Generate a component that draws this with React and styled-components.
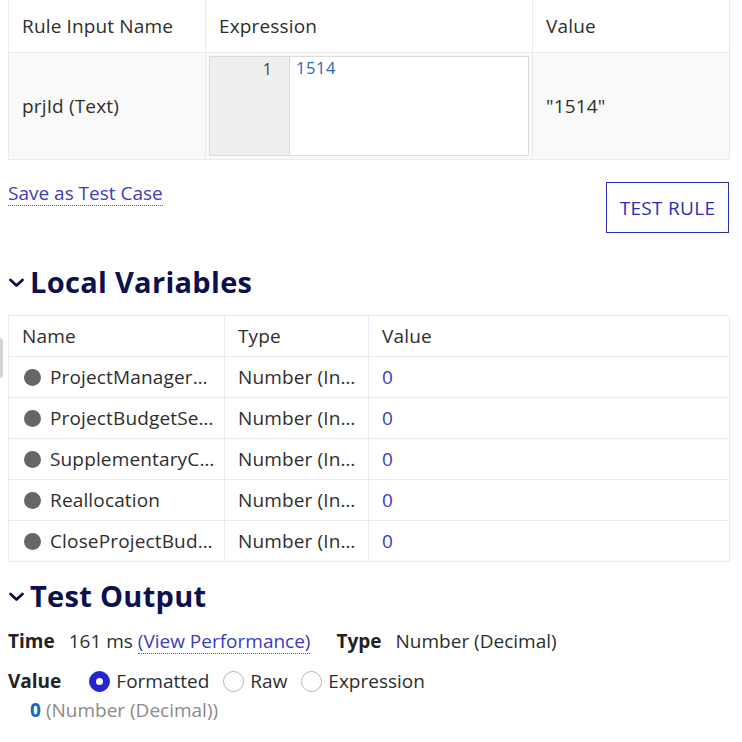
import React from "react";
import styled, { createGlobalStyle } from "styled-components";

const Global = createGlobalStyle`
  html, body { margin: 0; padding: 0; background: #fff; }
  body { font-family: "Open Sans", "Noto Sans", sans-serif; color: #2e2e2e; }
  * { box-sizing: border-box; }
`;

const Page = styled.div`
  position: relative;
  width: 742px;
  padding: 0 13px 0 8px;
`;

const Handle = styled.div`
  position: absolute;
  left: -3px;
  top: 338px;
  width: 6px;
  height: 40px;
  border-radius: 3px;
  background: #d4d4d4;
`;

const Table = styled.div`
  display: grid;
  grid-template-columns: ${(p) => p.$cols};
  border-left: 1px solid #ebebeb;
  border-top: ${(p) => (p.$noTop ? "none" : "1px solid #ebebeb")};
`;

const Cell = styled.div`
  display: flex;
  align-items: center;
  height: ${(p) => p.$h}px;
  padding: ${(p) => (p.$pad != null ? p.$pad : "0 13px")};
  border-right: 1px solid #ebebeb;
  border-bottom: 1px solid #ebebeb;
  background: ${(p) => p.$bg || "#fff"};
  font-size: 19px;
  letter-spacing: 0.15px;
  color: #2e2e2e;
  white-space: nowrap;
  overflow: hidden;
  min-width: 0;
`;

const Editor = styled.div`
  display: flex;
  width: 100%;
  height: 100%;
  border: 1px solid #dcdcdc;
  background: #fff;
`;

const Gutter = styled.div`
  width: 80px;
  background: #efefef;
  border-right: 1px solid #dcdcdc;
  text-align: right;
  padding: 1px 17px 0 0;
  font-size: 16px;
  color: #444;
  line-height: 22px;
`;

const Code = styled.div`
  padding: 0 0 0 6px;
  font-size: 16.5px;
  line-height: 22px;
  color: #1b6bbf;
  letter-spacing: 0.6px;
`;

const ActionRow = styled.div`
  display: flex;
  justify-content: space-between;
  align-items: flex-start;
  margin-top: 21px;
`;

const DottedLink = styled.a`
  font-size: 19px;
  line-height: 24px;
  color: #3c3cc4;
  text-decoration: none;
  border-bottom: 1px dotted #666;
  cursor: pointer;
`;

const OutlineButton = styled.button`
  height: 51px;
  width: 123px;
  border: 1px solid #2b2bb8;
  background: #fff;
  color: #2b2bb8;
  font-family: inherit;
  font-size: 19px;
  font-weight: 500;
  letter-spacing: 0.3px;
  padding: 0;
  margin-top: 1px;
`;

const SectionHeading = styled.h2`
  display: flex;
  align-items: center;
  gap: 5px;
  margin: ${(p) => p.$m};
  font-size: 29px;
  font-weight: 700;
  line-height: 36px;
  color: #0d104f;
  letter-spacing: 0.3px;
`;

const Chevron = () => (
  <svg width="17" height="12" viewBox="0 0 17 12" style={{ marginTop: 2 }}>
    <path d="M2.5 3 L8.5 8.5 L14.5 3" fill="none" stroke="#0d104f" strokeWidth="2.8" strokeLinecap="round" strokeLinejoin="round" />
  </svg>
);

const Dot = styled.span`
  width: 17px;
  height: 17px;
  border-radius: 50%;
  background: #666;
  flex: none;
  margin: 0 9px 0 2px;
`;

const Blue = styled.span`
  color: #3a3ac4;
`;

const InfoLine = styled.div`
  display: flex;
  align-items: center;
  font-size: 19px;
  line-height: 26px;
  margin-top: ${(p) => p.$mt}px;
  color: #2e2e2e;
`;

const Label = styled.span`
  font-weight: 700;
  color: #222;
  margin-right: ${(p) => p.$mr}px;
`;

const Spacer = styled.span`
  display: inline-block;
  width: ${(p) => p.$w}px;
`;

const Radio = styled.span`
  display: inline-flex;
  align-items: center;
  justify-content: center;
  width: 21px;
  height: 21px;
  border-radius: 50%;
  margin-right: 6px;
  flex: none;
  background: ${(p) => (p.$on ? "#2525d0" : "#fff")};
  border: 1px solid ${(p) => (p.$on ? "#2525d0" : "#b4b4b4")};
  &::after {
    content: "";
    display: ${(p) => (p.$on ? "block" : "none")};
    width: 7px;
    height: 7px;
    border-radius: 50%;
    background: #fff;
  }
`;

const RadioOption = styled.label`
  display: inline-flex;
  align-items: center;
  margin-right: 14px;
`;

const Result = styled.div`
  font-size: 19px;
  line-height: 24px;
  padding-left: 22px;
  margin-top: 4px;
  color: #8a8a8a;
`;

const ResultNum = styled.span`
  color: #1466c4;
  font-weight: 700;
  margin-right: 5px;
`;

const vars = [
  "ProjectManager…",
  "ProjectBudgetSe…",
  "SupplementaryC…",
  "Reallocation",
  "CloseProjectBud…",
];

export default function App() {
  return (
    <Page>
      <Global />
      <Handle />
      <Table $cols="197px 327px 197px" $noTop>
        <Cell $h={53}>Rule Input Name</Cell>
        <Cell $h={53}>Expression</Cell>
        <Cell $h={53}>Value</Cell>
        <Cell $h={107} $bg="#f9f9f9">prjId (Text)</Cell>
        <Cell $h={107} $bg="#f9f9f9" $pad="3px 3px 3px 3px">
          <Editor>
            <Gutter>1</Gutter>
            <Code>1514</Code>
          </Editor>
        </Cell>
        <Cell $h={107} $bg="#f9f9f9">"1514"</Cell>
      </Table>

      <ActionRow>
        <DottedLink>Save as Test Case</DottedLink>
        <OutlineButton>TEST RULE</OutlineButton>
      </ActionRow>

      <SectionHeading $m="31px 0 15px 0">
        <Chevron />
        Local Variables
      </SectionHeading>

      <Table $cols="216px 144px 361px">
        <Cell $h={41}>Name</Cell>
        <Cell $h={41}>Type</Cell>
        <Cell $h={41}>Value</Cell>
        {vars.map((v) => (
          <React.Fragment key={v}>
            <Cell $h={41} $pad="0 8px 0 13px">
              <Dot />
              {v}
            </Cell>
            <Cell $h={41} $pad="0 8px 0 13px">
              Number (In…
            </Cell>
            <Cell $h={41}>
              <Blue>0</Blue>
            </Cell>
          </React.Fragment>
        ))}
      </Table>

      <SectionHeading $m="16px 0 0 0">
        <Chevron />
        Test Output
      </SectionHeading>

      <InfoLine $mt={14}>
        <Label $mr={14}>Time</Label>
        161 ms&nbsp;<DottedLink>(View Performance)</DottedLink>
        <Spacer $w={26} />
        <Label $mr={14}>Type</Label>
        Number (Decimal)
      </InfoLine>

      <InfoLine $mt={14}>
        <Label $mr={28}>Value</Label>
        <RadioOption>
          <Radio $on />
          Formatted
        </RadioOption>
        <RadioOption>
          <Radio />
          Raw
        </RadioOption>
        <RadioOption>
          <Radio />
          Expression
        </RadioOption>
      </InfoLine>

      <Result>
        <ResultNum>0</ResultNum>(Number (Decimal))
      </Result>
    </Page>
  );
}
